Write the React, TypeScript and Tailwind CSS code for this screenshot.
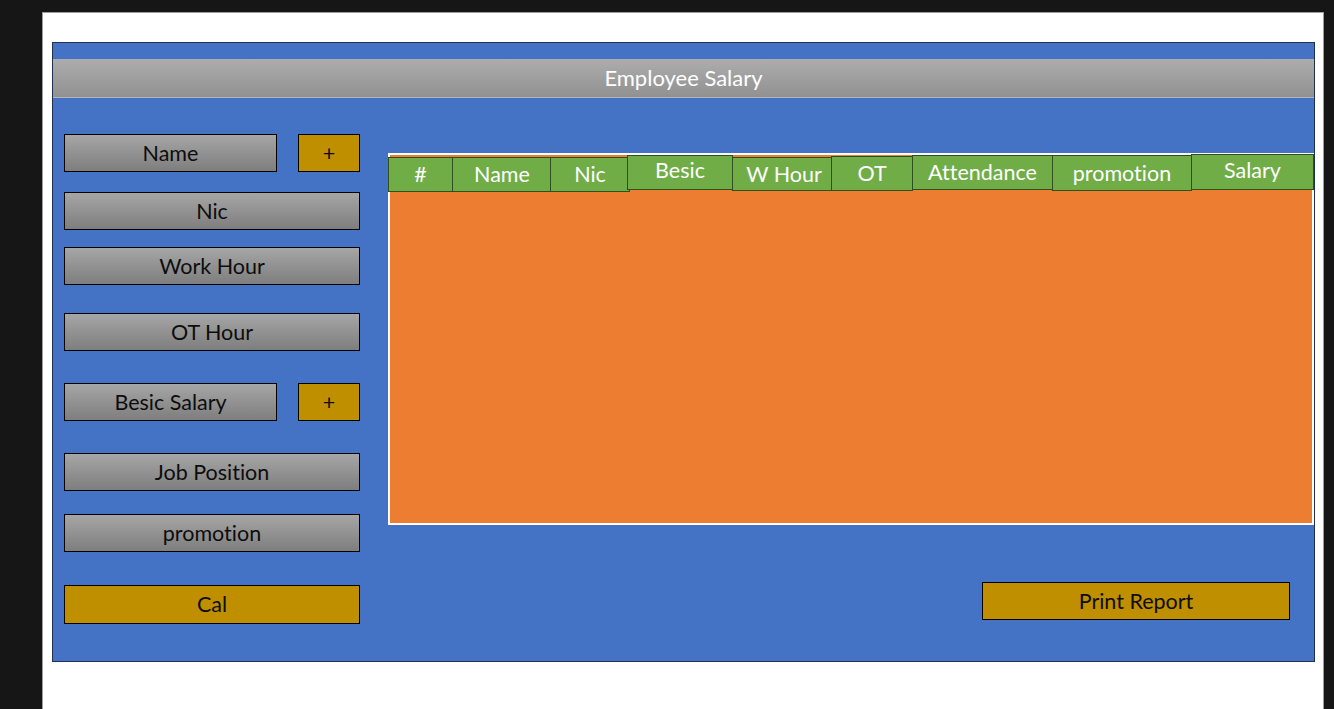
import React from "react";

const fields = [
  { label: "Name", top: "mt-[36px]", plus: true },
  { label: "Nic", top: "mt-[20px]", plus: false },
  { label: "Work Hour", top: "mt-[17px]", plus: false },
  { label: "OT Hour", top: "mt-[28px]", plus: false },
  { label: "Besic Salary", top: "mt-[32px]", plus: true },
  { label: "Job Position", top: "mt-[32px]", plus: false },
  { label: "promotion", top: "mt-[23px]", plus: false },
];

// header cells are a bit uneven in the mockup, keep the offsets
const columns = [
  { label: "#", cls: "w-[65px] h-[35px] mt-[2px]" },
  { label: "Name", cls: "w-[100px] h-[35px] mt-[2px] -ml-px" },
  { label: "Nic", cls: "w-[80px] h-[35px] mt-[2px] -ml-[2px]" },
  { label: "Besic", cls: "w-[106px] h-[35px] mt-0 -ml-[3px] pb-[4px]" },
  { label: "W Hour", cls: "w-[104px] h-[34px] mt-[2px] -ml-px" },
  { label: "OT", cls: "w-[82px] h-[35px] mt-px -ml-[5px]" },
  { label: "Attendance", cls: "w-[141px] h-[35px] mt-0 -ml-px" },
  { label: "promotion", cls: "w-[140px] h-[36px] mt-0 -ml-px" },
  { label: "Salary", cls: "w-[123px] h-[36px] -mt-px -ml-px pb-[3px]" },
];

const GrayField = ({ label, wide }: { label: string; wide: boolean }) => (
  <div
    className={`${wide ? "w-[296px]" : "w-[213px]"} h-[38px] border border-black bg-linear-to-b from-[#a6a6a6] to-[#7e7e7e] flex items-center justify-center text-[21.5px] text-[#0d0d0d]`}
  >
    {label}
  </div>
);

const EmployeeSalary = () => {
  return (
    <div
      className="min-h-screen bg-[#161616] pt-[12px] pl-[42px] overflow-hidden [font-variant-ligatures:none]"
      style={{ fontFamily: "Lato, 'Open Sans', sans-serif" }}
    >
      <div className="w-[1282px] h-[697px] bg-white border-l border-t border-r border-[#9d9d9d] pt-[29px] pl-[9px]">
        {/* Main panel */}
        <div className="w-[1263px] h-[620px] bg-[#4472c4] border border-[#1f3050] flex flex-col">
          <div className="mt-[16px] h-[39px] shrink-0 bg-linear-to-b from-[#adadad] to-[#919191] border-b border-[#b5b5b5] flex items-center justify-center text-white text-[22px] pb-px">
            Employee Salary
          </div>

          <div className="flex">
            {/* Inputs */}
            <div className="ml-[11px] w-[296px] shrink-0 flex flex-col">
              {fields.map((f) => (
                <div key={f.label} className={`${f.top} flex justify-between`}>
                  <GrayField label={f.label} wide={!f.plus} />
                  {f.plus && (
                    <div className="w-[62px] h-[38px] border border-black bg-[#bf8f00] flex items-center justify-center text-[21.5px] text-[#0d0d0d]">
                      +
                    </div>
                  )}
                </div>
              ))}
              <div className="mt-[33px] w-[296px] h-[39px] border border-black bg-[#bf8f00] flex items-center justify-center text-[21.5px] text-[#0d0d0d]">
                Cal
              </div>
            </div>

            {/* Table */}
            <div className="ml-[28px] w-[926px] shrink-0 flex flex-col">
              <div className="mt-[55px] h-[372px] border-2 border-white bg-[#ed7d31]">
                <div className="flex items-start -ml-[2px]">
                  {columns.map((c) => (
                    <div
                      key={c.label}
                      className={`${c.cls} shrink-0 border border-[#2f4f1c] bg-[#70ad47] flex items-center justify-center text-white text-[21.5px]`}
                    >
                      {c.label}
                    </div>
                  ))}
                </div>
              </div>
              <div className="mt-[57px] ml-[594px] w-[308px] h-[38px] border border-black bg-[#bf8f00] flex items-center justify-center text-[21.5px] text-[#0d0d0d]">
                Print Report
              </div>
            </div>
          </div>
        </div>
      </div>
    </div>
  );
};

export default function App() {
  return <EmployeeSalary />;
}
